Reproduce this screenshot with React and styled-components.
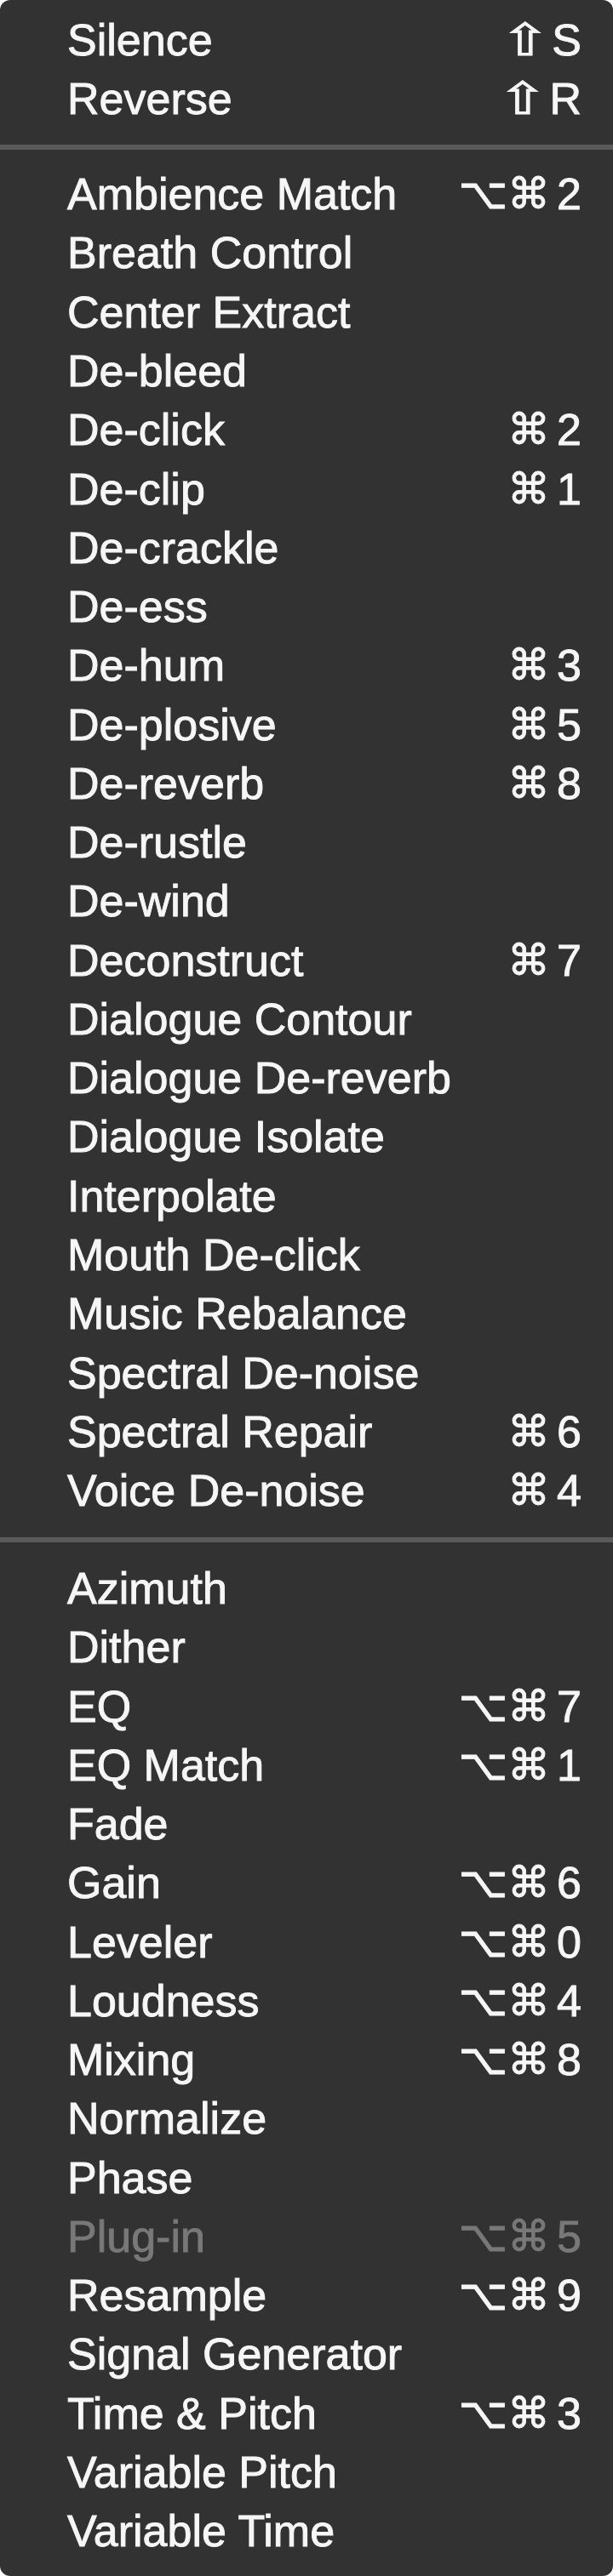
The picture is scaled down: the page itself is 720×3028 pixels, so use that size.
import React from "react";
import styled, { createGlobalStyle } from "styled-components";

const Global = createGlobalStyle`
  html, body {
    margin: 0;
    padding: 0;
    background: #ffffff;
  }
  #root {
    width: 720px;
  }
`;

const Menu = styled.div`
  box-sizing: border-box;
  width: 720px;
  height: 3028px;
  padding-top: 13px;
  background: #323232;
  border-radius: 12px;
  font-family: "Liberation Sans", "DejaVu Sans", Arial, sans-serif;
  font-size: 52px;
  color: #f6f6f6;
  overflow: hidden;
`;

const Group = styled.div`
  display: flex;
  flex-direction: column;
`;

const Item = styled.div`
  display: flex;
  justify-content: space-between;
  align-items: center;
  height: 69.27px;
  line-height: 69.27px;
  padding: 0 37px 0 79px;
  color: ${(p) => (p.$disabled ? "#787878" : "#f6f6f6")};
  -webkit-text-stroke: 0.9px currentColor;
  white-space: nowrap;
`;

const Label = styled.span``;

const Shortcut = styled.span`
  display: flex;
  align-items: center;
  gap: ${(p) => (p.$tight ? "10px" : "8px")};
`;

const Mod = styled.span`
  font-family: "DejaVu Sans", sans-serif;
  font-size: 50px;
`;

const ShiftMod = styled.span`
  display: inline-block;
  font-family: "DejaVu Sans", sans-serif;
  font-size: 52px;
  transform: scaleX(1.35);
`;

const Key = styled.span`
  font-family: "Liberation Sans", "DejaVu Sans", sans-serif;
`;

const Separator = styled.div`
  height: ${(p) => p.$h}px;
  display: flex;
  align-items: center;
  &::after {
    content: "";
    display: block;
    width: 100%;
    height: 6px;
    background: #5a5a5a;
  }
`;

const groups = [
  [
    ["Silence", "⇧", "S"],
    ["Reverse", "⇧", "R"],
  ],
  [
    ["Ambience Match", "⌥⌘", "2"],
    ["Breath Control"],
    ["Center Extract"],
    ["De-bleed"],
    ["De-click", "⌘", "2"],
    ["De-clip", "⌘", "1"],
    ["De-crackle"],
    ["De-ess"],
    ["De-hum", "⌘", "3"],
    ["De-plosive", "⌘", "5"],
    ["De-reverb", "⌘", "8"],
    ["De-rustle"],
    ["De-wind"],
    ["Deconstruct", "⌘", "7"],
    ["Dialogue Contour"],
    ["Dialogue De-reverb"],
    ["Dialogue Isolate"],
    ["Interpolate"],
    ["Mouth De-click"],
    ["Music Rebalance"],
    ["Spectral De-noise"],
    ["Spectral Repair", "⌘", "6"],
    ["Voice De-noise", "⌘", "4"],
  ],
  [
    ["Azimuth"],
    ["Dither"],
    ["EQ", "⌥⌘", "7"],
    ["EQ Match", "⌥⌘", "1"],
    ["Fade"],
    ["Gain", "⌥⌘", "6"],
    ["Leveler", "⌥⌘", "0"],
    ["Loudness", "⌥⌘", "4"],
    ["Mixing", "⌥⌘", "8"],
    ["Normalize"],
    ["Phase"],
    ["Plug-in", "⌥⌘", "5", true],
    ["Resample", "⌥⌘", "9"],
    ["Signal Generator"],
    ["Time & Pitch", "⌥⌘", "3"],
    ["Variable Pitch"],
    ["Variable Time"],
  ],
];

const sepHeights = [42.7, 45.7];

export default function App() {
  return (
    <>
      <Global />
      <Menu>
        {groups.map((items, gi) => (
          <React.Fragment key={gi}>
            {gi > 0 && <Separator $h={sepHeights[gi - 1]} />}
            <Group>
              {items.map(([label, mods, key, disabled]) => (
                <Item key={label} $disabled={disabled}>
                  <Label>{label}</Label>
                  {mods && (
                    <Shortcut $tight={mods === "⇧"}>
                      {mods === "⇧" ? <ShiftMod>{mods}</ShiftMod> : <Mod>{mods}</Mod>}
                      <Key>{key}</Key>
                    </Shortcut>
                  )}
                </Item>
              ))}
            </Group>
          </React.Fragment>
        ))}
      </Menu>
    </>
  );
}
